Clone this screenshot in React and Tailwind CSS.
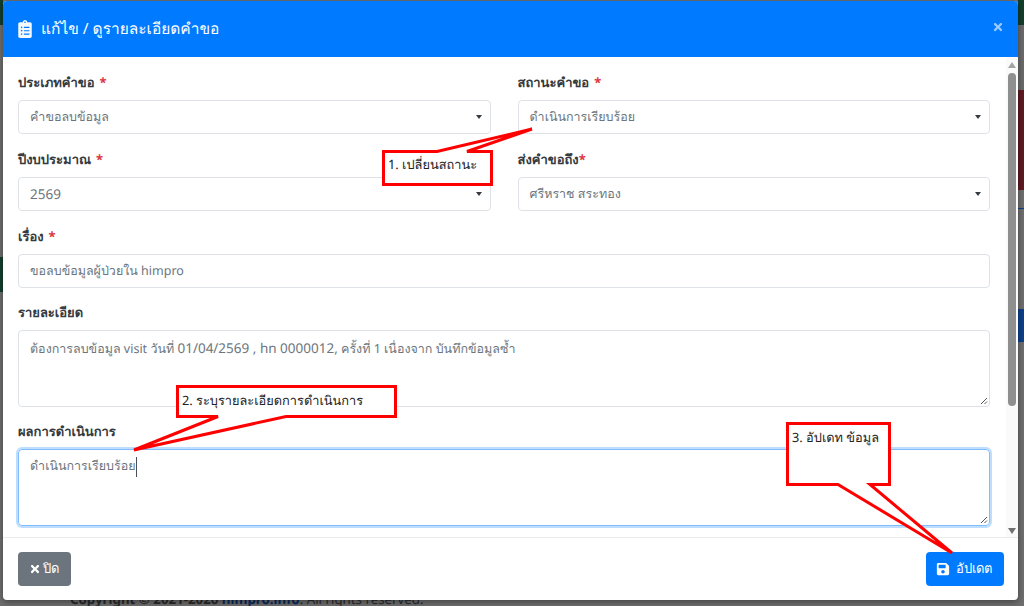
import React from 'react';
import { FaClipboardList, FaSave, FaTimes } from 'react-icons/fa';

const font = { fontFamily: '"Noto Sans", "DejaVu Sans", sans-serif' };

const Label = ({ children, star, tight }) => (
  <label className="block text-[13px] font-bold text-[#343a40] leading-[20px] mb-[8px]">
    {children}
    {star && <span className={`text-[#dc3545] ${tight ? '' : 'ml-[5px]'}`}>*</span>}
  </label>
);

const SelectBox = ({ value, digits }) => (
  <div className={`h-[34px] border border-[#dee2e6] rounded-[4px] bg-white flex items-center justify-between pl-[11px] pr-[8px] text-[#6c757d] ${digits ? 'text-[13.5px]' : 'text-[12.5px]'}`}>
    <span>{value}</span>
    <span className="w-0 h-0 border-x-[3.5px] border-x-transparent border-t-[4px] border-t-[#343a40]" />
  </div>
);

const Grip = () => (
  <svg className="absolute right-[1px] bottom-[1px]" width="8" height="8" viewBox="0 0 8 8">
    <path d="M1 7 L7 1 M4.5 7 L7 4.5" stroke="#555" strokeWidth="1" fill="none" />
  </svg>
);

const Note = ({ className, children }) => (
  <span className={`absolute text-[12.8px] leading-[18px] text-[#222] whitespace-nowrap ${className}`}>{children}</span>
);

export default function App() {
  return (
    <div className="relative w-[1024px] h-[606px] overflow-hidden bg-[#6e6e6e] flex justify-between [text-rendering:geometricPrecision]" style={font}>
      {/* page behind the modal, dimmed */}
      <div className="w-[3px] flex flex-col">
        <div className="h-[25px] bg-[#123f2c]" />
        <div className="h-[232px]" />
        <div className="h-[35px] bg-[#123f2c]" />
      </div>
      <div className="w-[6px] flex flex-col">
        <div className="h-[25px] bg-[#123f2c]" />
        <div className="h-[65px] bg-[#6a6a6a]" />
        <div className="h-[100px] bg-[#5e1a20]" />
        <div className="h-[18px]" />
        <div className="h-[1px] bg-[#0d3f8a]" />
        <div className="h-[100px]" />
        <div className="h-[33px] bg-[#0d3f8a]" />
      </div>
      <div className="absolute left-[70px] top-[590px] text-[13.3px] leading-[18px] text-[#2a2a2a] whitespace-nowrap">
        <b>Copyright © 2021-2026 </b><b className="text-[#0a2a5e]">himpro.info</b>. All rights reserved.
      </div>

      {/* modal */}
      <div className="absolute left-[3px] top-[1px] w-[1015px] h-[599px] bg-white rounded-[4px] overflow-hidden flex flex-col shadow-[0_2px_6px_rgba(0,0,0,0.4)]">
        <div className="h-[56px] bg-[#007bff] flex items-center justify-between pl-[15px] pr-[15px] shrink-0 text-white">
          <div className="flex items-center gap-[9px] text-[15.5px]">
            <FaClipboardList className="w-[14px] h-[18px] text-[#f4f9ff]" />
            <span>แก้ไข / ดูรายละเอียดคำขอ</span>
          </div>
          <FaTimes className="w-[10px] h-[12px] text-[#9ccaff] mb-[4px]" />
        </div>
        <div className="flex-1 flex min-h-0 border-b border-[#e9ecef]">
          <div className="flex-1 pl-[15px] pr-[16px] pt-[15px]">
            <div className="grid grid-cols-2 gap-x-[27px]">
              <div className="mb-[15px]"><Label star>ประเภทคำขอ</Label><SelectBox value="คำขอลบข้อมูล" /></div>
              <div className="mb-[15px]"><Label star>สถานะคำขอ</Label><SelectBox value="ดำเนินการเรียบร้อย" /></div>
              <div className="mb-[15px]"><Label star>ปีงบประมาณ</Label><SelectBox value="2569" digits /></div>
              <div className="mb-[15px]"><Label star tight>ส่งคำขอถึง</Label><SelectBox value="ศรีหราช สระทอง" /></div>
            </div>
            <div className="mb-[14px]">
              <Label star>เรื่อง</Label>
              <div className="h-[34px] border border-[#dee2e6] rounded-[4px] flex items-center pl-[11px] text-[12.5px] text-[#6c757d]">ขอลบข้อมูลผู้ป่วยใน himpro</div>
            </div>
            <div className="mb-[14px]">
              <Label>รายละเอียด</Label>
              <div className="relative h-[77px] border border-[#dee2e6] rounded-[4px] pl-[11px] pt-[7px] text-[12.5px] text-[#6c757d]">
                ต้องการลบข้อมูล visit วันที่ <span className="text-[13.5px]">01/04/2569 , hn 0000012,</span> ครั้งที่ 1 เนื่องจาก บันทึกข้อมูลซ้ำ
                <Grip />
              </div>
            </div>
            <div>
              <Label>ผลการดำเนินการ</Label>
              <div className="relative h-[77px] border border-[#80bdff] shadow-[0_0_0_2px_rgba(0,123,255,0.25)] rounded-[4px] pl-[11px] pt-[7px] text-[12.5px] text-[#6c757d]">
                ดำเนินการเรียบร้อย<span className="inline-block w-px h-[20px] bg-[#495057] align-middle" />
                <Grip />
              </div>
            </div>
          </div>
          <div className="w-[12px] flex flex-col items-center bg-[#fafafa]">
            <span className="mt-[5px] w-0 h-0 border-x-[4px] border-x-transparent border-b-[6px] border-b-[#a3a3a3]" />
            <span className="mt-[5px] w-[8px] h-[333px] bg-[#8f8f8f] rounded-full" />
            <span className="mt-auto mb-[3px] w-0 h-0 border-x-[4px] border-x-transparent border-t-[6px] border-t-[#707070]" />
          </div>
        </div>
        <div className="h-[62px] shrink-0 flex items-start pt-[14px] justify-between pl-[15px] pr-[14px]">
          <button className="h-[34px] w-[53px] bg-[#6c757d] text-white rounded-[4px] text-[13px] flex items-center justify-center gap-[3px]">
            <FaTimes className="w-[10px] h-[12px]" />ปิด
          </button>
          <button className="h-[34px] w-[78px] bg-[#007bff] text-white rounded-[4px] text-[13px] flex items-center justify-center gap-[6px] pr-[2px]">
            <FaSave className="w-[14px] h-[14px]" />อัปเดต
          </button>
        </div>
      </div>

      {/* annotation callouts drawn over the screenshot */}
      <svg className="absolute inset-0 pointer-events-none" width="1024" height="606" viewBox="0 0 1024 606">
        <g fill="#fff" stroke="#ff0000" strokeWidth="3">
          <polygon points="383.5,151.5 437,151.5 532,129 467,151.5 491.5,151.5 491.5,184.5 383.5,184.5" />
          <polygon points="177.5,386.5 395.5,386.5 395.5,416.5 286,416.5 134,450 218,416.5 177.5,416.5" />
          <polygon points="787.5,423.5 889.5,423.5 889.5,484.5 870,484.5 952,553 838,484.5 787.5,484.5" />
        </g>
      </svg>
      <Note className="left-[388px] top-[155px]">1. เปลี่ยนสถานะ</Note>
      <Note className="left-[182px] top-[391px]">2. ระบุรายละเอียดการดำเนินการ</Note>
      <Note className="left-[792px] top-[428px]">3. อัปเดท ข้อมูล</Note>
    </div>
  );
}
